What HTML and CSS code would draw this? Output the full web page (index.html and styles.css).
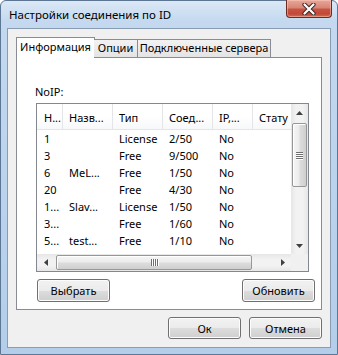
FILE: index.html
```html
<!DOCTYPE html>
<html lang="ru">
<head>
<meta charset="utf-8">
<title>Настройки соединения по ID</title>
<link rel="stylesheet" href="styles.css">
</head>
<body>
<div class="window">
  <div class="titlebar">
    <span class="title">Настройки соединения по ID</span>
    <div class="close">
      <svg width="14" height="12" viewBox="0 0 14 12">
        <path d="M2.5 1.5 L11.5 10.5 M11.5 1.5 L2.5 10.5" stroke="#3a2a28" stroke-width="4.2" stroke-linecap="round" fill="none"/>
        <path d="M2.5 1.5 L11.5 10.5 M11.5 1.5 L2.5 10.5" stroke="#ffffff" stroke-width="2.2" stroke-linecap="round" fill="none"/>
      </svg>
    </div>
  </div>
  <div class="client">
    <div class="tabs">
      <div class="tab tab-active tab-info">Информация</div>
      <div class="tab tab-options">Опции</div>
      <div class="tab tab-servers">Подключенные сервера</div>
    </div>
    <div class="panel">
      <div class="label">NoIP:</div>
      <div class="list">
        <div class="list-main">
          <div class="list-view">
            <div class="row head">
              <div class="c c1">Н...</div>
              <div class="c c2">Назв...</div>
              <div class="c c3">Тип</div>
              <div class="c c4">Соед...</div>
              <div class="c c5">IP,...</div>
              <div class="c c6">Стату</div>
            </div>
            <div class="row"><div class="c c1">1</div><div class="c c2"></div><div class="c c3">License</div><div class="c c4">2/50</div><div class="c c5">No</div><div class="c c6"></div></div>
            <div class="row"><div class="c c1">3</div><div class="c c2"></div><div class="c c3">Free</div><div class="c c4">9/500</div><div class="c c5">No</div><div class="c c6"></div></div>
            <div class="row"><div class="c c1">6</div><div class="c c2">MeL...</div><div class="c c3">Free</div><div class="c c4">1/50</div><div class="c c5">No</div><div class="c c6"></div></div>
            <div class="row"><div class="c c1">20</div><div class="c c2"></div><div class="c c3">Free</div><div class="c c4">4/30</div><div class="c c5">No</div><div class="c c6"></div></div>
            <div class="row"><div class="c c1">1...</div><div class="c c2">Slav...</div><div class="c c3">License</div><div class="c c4">1/50</div><div class="c c5">No</div><div class="c c6"></div></div>
            <div class="row"><div class="c c1">3...</div><div class="c c2"></div><div class="c c3">Free</div><div class="c c4">1/60</div><div class="c c5">No</div><div class="c c6"></div></div>
            <div class="row"><div class="c c1">5...</div><div class="c c2">test...</div><div class="c c3">Free</div><div class="c c4">1/10</div><div class="c c5">No</div><div class="c c6"></div></div>
          </div>
          <div class="vscroll">
            <div class="arrow"><svg width="7" height="4" viewBox="0 0 7 4"><path d="M0 4 L3.5 0 L7 4 Z" fill="#404040"/></svg></div>
            <div class="vtrack">
              <div class="vthumb"><span class="grip-h"></span><span class="grip-h"></span><span class="grip-h"></span><span class="grip-h"></span></div>
            </div>
            <div class="arrow"><svg width="7" height="4" viewBox="0 0 7 4"><path d="M0 0 L7 0 L3.5 4 Z" fill="#404040"/></svg></div>
          </div>
        </div>
        <div class="list-bottom">
          <div class="hscroll">
            <div class="arrow"><svg width="4" height="7" viewBox="0 0 4 7"><path d="M4 0 L4 7 L0 3.5 Z" fill="#404040"/></svg></div>
            <div class="htrack">
              <div class="hthumb"><span class="grip-v"></span><span class="grip-v"></span><span class="grip-v"></span><span class="grip-v"></span></div>
            </div>
            <div class="arrow"><svg width="4" height="7" viewBox="0 0 4 7"><path d="M0 0 L4 3.5 L0 7 Z" fill="#404040"/></svg></div>
          </div>
          <div class="corner"></div>
        </div>
      </div>
      <div class="panel-buttons">
        <button class="btn">Выбрать</button>
        <button class="btn">Обновить</button>
      </div>
    </div>
    <div class="dialog-buttons">
      <button class="btn btn-dialog">Ок</button>
      <button class="btn btn-dialog">Отмена</button>
    </div>
  </div>
</div>
</body>
</html>
```

FILE: styles.css
```css
html, body {
  margin: 0;
  padding: 0;
  background: #ffffff;
}

body {
  font-family: "Noto Sans", "Open Sans", sans-serif;
  font-size: 11px;
  color: #000000;
}

.window {
  width: 338px;
  height: 355px;
  box-sizing: border-box;
  border: 1px solid #5d7693;
  border-radius: 6px 6px 0 0;
  background: linear-gradient(to bottom, #dbe8f6 0px, #c4d9ef 20px, #bad2ec 60%, #b4cde9 100%);
  display: flex;
  flex-direction: column;
  padding: 0 6px 6px 6px;
}

.titlebar {
  height: 27px;
  display: flex;
  align-items: flex-start;
  flex-shrink: 0;
}

.title {
  padding-left: 2px;
  padding-top: 6px;
  line-height: 16px;
  font-size: 11.5px;
  color: #000000;
  flex: 1;
}

.close {
  width: 46px;
  height: 18px;
  box-sizing: border-box;
  margin-top: -1px;
  margin-right: -1px;
  border: 1px solid #6b2b22;
  border-top: none;
  border-radius: 0 0 4px 4px;
  background: linear-gradient(to bottom, #e8a798 0%, #d88676 45%, #c75443 55%, #c2483a 80%, #d26a4f 100%);
  box-shadow: inset 0 0 0 1px rgba(255, 210, 200, 0.45);
  display: flex;
  align-items: center;
  justify-content: center;
}

.close svg {
  display: block;
}

.client {
  flex: 1;
  background: #f0f0f0;
  border: 1px solid #8a9cb2;
  display: flex;
  flex-direction: column;
  padding: 8px 0 0 8px;
}

.tabs {
  display: flex;
  align-items: flex-end;
  height: 20px;
  position: relative;
  z-index: 1;
}

.tab {
  box-sizing: border-box;
  height: 18px;
  border: 1px solid #898c95;
  border-bottom: none;
  background: linear-gradient(to bottom, #f2f2f2, #e4e4e4);
  text-align: center;
  line-height: 16px;
  white-space: nowrap;
}

.tab-active {
  height: 21px;
  margin-bottom: -1px;
  background: #ffffff;
  line-height: 18px;
}

.tab-info {
  width: 79px;
}

.tab-options {
  width: 44px;
  margin-left: -1px;
  border-left: none;
}

.tab-servers {
  width: 134px;
  margin-left: -1px;
}

.panel {
  width: 306px;
  height: 253px;
  box-sizing: border-box;
  background: #ffffff;
  border: 1px solid #898c95;
  padding: 26px 0 0 19px;
  display: flex;
  flex-direction: column;
}

.label {
  line-height: 15px;
  margin-left: -1px;
  height: 15px;
  margin-bottom: 4px;
}

.list {
  width: 273px;
  height: 169px;
  box-sizing: border-box;
  border: 1px solid #828790;
  display: flex;
  flex-direction: column;
}

.list-main {
  display: flex;
  height: 150px;
}

.list-view {
  width: 254px;
  overflow: hidden;
}

.row {
  display: flex;
  height: 17px;
  line-height: 17px;
  white-space: nowrap;
}

.row.head {
  height: 26px;
  box-sizing: border-box;
  line-height: 24px;
  padding-top: 2px;
  border-bottom: 1px solid #e5e5e5;
  background: linear-gradient(to bottom, #ffffff 0%, #ffffff 50%, #f7f8f9 100%);
}

.c {
  box-sizing: border-box;
  flex-shrink: 0;
  overflow: hidden;
  padding-left: 6px;
}

.head .c {
  border-right: 1px solid #e3e5e8;
  margin-top: -2px;
  padding-top: 2px;
}

.c1 { width: 26px; padding-left: 7px; }
.c2 { width: 50px; }
.c3 { width: 50px; }
.c4 { width: 50px; }
.c5 { width: 40px; }
.c6 { width: 38px; }

.head .c6 {
  border-right: none;
}

.vscroll {
  width: 17px;
  display: flex;
  flex-direction: column;
  background: linear-gradient(to right, #e6e6e6, #f2f2f2 30%, #f2f2f2 70%, #e6e6e6);
}

.arrow {
  width: 17px;
  height: 17px;
  display: flex;
  align-items: center;
  justify-content: center;
  flex-shrink: 0;
}

.arrow svg {
  display: block;
}

.vtrack {
  flex: 1;
  padding: 2px 1px 0 1px;
}

.vthumb {
  height: 64px;
  box-sizing: border-box;
  border: 1px solid #979797;
  border-radius: 2px;
  background: linear-gradient(to right, #f6f6f6 0%, #ececec 45%, #dcdcdc 55%, #cfcfcf 100%);
  box-shadow: inset 1px 1px 0 #ffffff;
  display: flex;
  flex-direction: column;
  align-items: center;
  justify-content: center;
  gap: 1px;
}

.grip-h {
  width: 7px;
  height: 1px;
  background: #6e6e6e;
  box-shadow: 0 1px 0 #ffffff;
}

.list-bottom {
  display: flex;
  height: 17px;
}

.hscroll {
  width: 254px;
  display: flex;
  background: linear-gradient(to bottom, #e6e6e6, #f2f2f2 30%, #f2f2f2 70%, #e6e6e6);
}

.htrack {
  flex: 1;
  padding: 1px 2px 1px 2px;
}

.hthumb {
  width: 196px;
  height: 15px;
  box-sizing: border-box;
  border: 1px solid #979797;
  border-radius: 2px;
  background: linear-gradient(to bottom, #f6f6f6 0%, #ececec 45%, #dcdcdc 55%, #cfcfcf 100%);
  box-shadow: inset 1px 1px 0 #ffffff;
  display: flex;
  align-items: center;
  justify-content: center;
  gap: 1px;
}

.grip-v {
  width: 1px;
  height: 7px;
  background: #6e6e6e;
  box-shadow: 1px 0 0 #ffffff;
}

.corner {
  width: 17px;
  background: #f0f0f0;
}

.panel-buttons {
  display: flex;
  justify-content: space-between;
  margin-top: 7px;
  width: 278px;
  padding-left: 1px;
}

.btn {
  font-family: "Noto Sans", "Open Sans", sans-serif;
  font-size: 11px;
  color: #000000;
  width: 73px;
  height: 23px;
  box-sizing: border-box;
  padding: 0;
  border: 1px solid #707070;
  border-radius: 3px;
  background: linear-gradient(to bottom, #f2f2f2 0%, #ebebeb 50%, #dddddd 50%, #cfcfcf 100%);
  box-shadow: inset 0 0 0 1px #fcfcfc;
  line-height: 19px;
}

.dialog-buttons {
  display: flex;
  justify-content: flex-end;
  gap: 8px;
  margin-top: 7px;
  padding-right: 8px;
}

.btn-dialog {
  height: 22px;
  width: 73px;
}
```
